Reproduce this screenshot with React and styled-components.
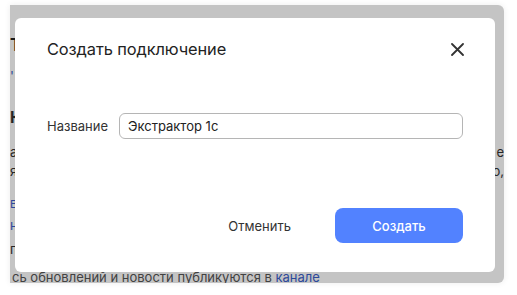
import styled, { createGlobalStyle } from 'styled-components'
import { useState } from 'react'

const GlobalStyle = createGlobalStyle`
  html, body {
    margin: 0;
    padding: 0;
    background: #ffffff;
    font-family: Inter, "Noto Sans", sans-serif;
  }
`

const Frame = styled.div`
  width: 517px;
  height: 295px;
  padding: 5px 13px 12px 10px;
  box-sizing: border-box;
`

const Backdrop = styled.div`
  position: relative;
  height: 100%;
  background: #ffffff;
  border-radius: 0 6px 6px 0;
  overflow: hidden;
  box-shadow: 0 0 6px rgba(0, 0, 0, 0.08);
`

const Page = styled.div`
  display: flex;
  flex-direction: column;
  padding: 30px 0 0 0;
  color: #222;
  font-size: 13px;
`

const Heading = styled.div`
  font-size: 17px;
  font-weight: 700;
  line-height: 20px;
  margin-bottom: 12px;
`

const Line = styled.div`
  display: flex;
  justify-content: space-between;
  line-height: 19px;
  margin-top: ${(p) => p.$gap || 0}px;
  color: ${(p) => (p.$link ? '#3b5fc9' : '#333')};
  font-weight: ${(p) => (p.$bold ? 700 : 400)};
  font-size: ${(p) => (p.$bold ? 16 : 13)}px;
`

const Dim = styled.div`
  position: absolute;
  inset: 0;
  background: rgba(0, 0, 0, 0.23);
`

const Footnote = styled.div`
  position: absolute;
  left: 2px;
  bottom: -1px;
  font-size: 13px;
  line-height: 14px;
  color: #555;
  white-space: nowrap;
  a {
    color: #3b5fc9;
    text-decoration: none;
  }
`

const Modal = styled.div`
  position: absolute;
  left: 5px;
  top: 13px;
  right: 9px;
  bottom: 11px;
  background: #ffffff;
  border-radius: 6px;
  padding: 22px 32px 29px 32px;
  box-sizing: border-box;
  display: flex;
  flex-direction: column;
`

const Header = styled.div`
  display: flex;
  align-items: center;
  justify-content: space-between;
  height: 18px;
`

const Title = styled.div`
  font-size: 16.4px;
  color: #222;
  letter-spacing: -0.1px;
`

const CloseBtn = styled.button`
  border: none;
  background: none;
  padding: 0;
  width: 16px;
  height: 16px;
  display: flex;
  align-items: center;
  justify-content: center;
  cursor: pointer;
  margin-right: -2px;
`

const Field = styled.div`
  display: flex;
  align-items: center;
  gap: 11px;
  margin-top: 55px;
`

const Label = styled.label`
  font-size: 13px;
  color: #333;
`

const TextInput = styled.input`
  flex: 1;
  height: 26px;
  box-sizing: border-box;
  border: 1px solid #b5b5b5;
  border-radius: 6px;
  padding: 0 8px;
  font-family: inherit;
  font-size: 13px;
  color: #222;
  &:focus {
    outline: none;
  }
`

const Actions = styled.div`
  margin-top: auto;
  display: flex;
  justify-content: flex-end;
  align-items: center;
  gap: 44px;
`

const CancelBtn = styled.button`
  border: none;
  background: none;
  font-family: inherit;
  font-size: 13px;
  color: #333;
  padding: 0;
  cursor: pointer;
`

const SubmitBtn = styled.button`
  width: 128px;
  height: 35px;
  border: none;
  border-radius: 8px;
  background: #5282ff;
  color: #ffffff;
  font-family: inherit;
  font-size: 13px;
  font-weight: 500;
  cursor: pointer;
`

export default function App() {
  const [name, setName] = useState('Экстрактор 1с')

  return (
    <>
      <GlobalStyle />
      <Frame>
        <Backdrop>
          <Page>
            <Heading>Т</Heading>
            <Line $link>'</Line>
            <Line $bold $gap={22}>К</Line>
            <Line $gap={16}>
              <span>а</span>
              <span>е</span>
            </Line>
            <Line>
              <span>я</span>
              <span>о,</span>
            </Line>
            <Line $link $gap={13}>в</Line>
            <Line $link $gap={3}>н</Line>
            <Line $gap={5}>п</Line>
          </Page>
          <Footnote>
            сь обновлений и новости публикуются в <a href="#">канале</a>
          </Footnote>
          <Dim />
          <Modal>
            <Header>
              <Title>Создать подключение</Title>
              <CloseBtn aria-label="Закрыть">
                <svg width="13" height="13" viewBox="0 0 13 13">
                  <path d="M1 1L12 12M12 1L1 12" stroke="#333" strokeWidth="1.8" strokeLinecap="round" />
                </svg>
              </CloseBtn>
            </Header>
            <Field>
              <Label>Название</Label>
              <TextInput value={name} onChange={(e) => setName(e.target.value)} />
            </Field>
            <Actions>
              <CancelBtn>Отменить</CancelBtn>
              <SubmitBtn>Создать</SubmitBtn>
            </Actions>
          </Modal>
        </Backdrop>
      </Frame>
    </>
  )
}
